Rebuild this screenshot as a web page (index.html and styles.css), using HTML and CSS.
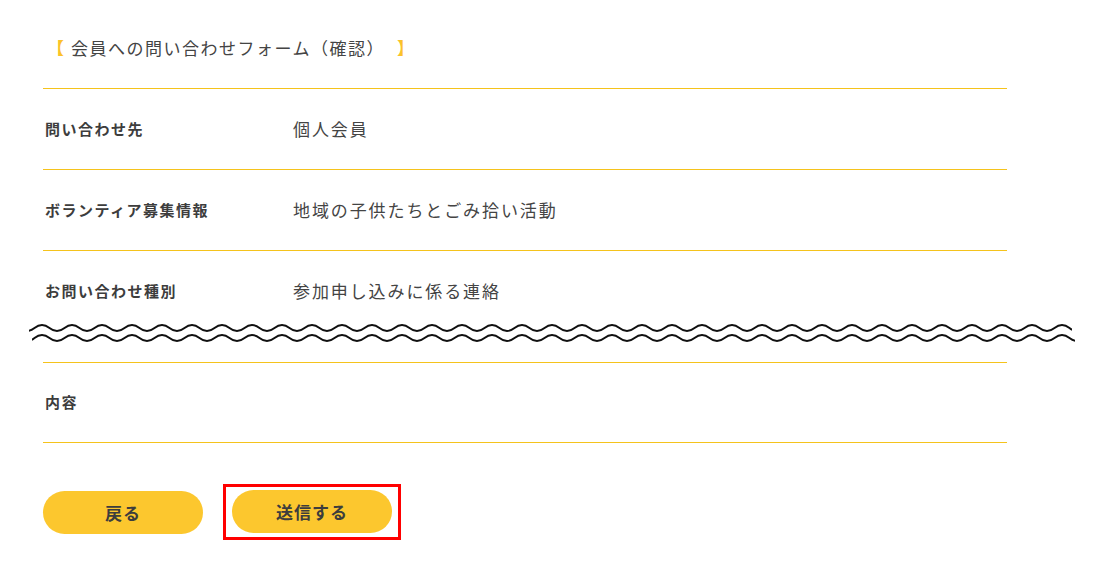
FILE: index.html
```html
<!DOCTYPE html>
<html lang="ja">
<head>
<meta charset="utf-8">
<title>会員への問い合わせフォーム（確認）</title>
<link rel="stylesheet" href="styles.css">
</head>
<body>
<main class="page">
  <h1 class="title"><span class="br br-open">【</span><span class="title-text">会員への問い合わせフォーム（確認）</span><span class="br br-close">】</span></h1>
  <dl class="rows">
    <div class="row">
      <dt class="label">問い合わせ先</dt>
      <dd class="value">個人会員</dd>
    </div>
    <div class="row">
      <dt class="label">ボランティア募集情報</dt>
      <dd class="value">地域の子供たちとごみ拾い活動</dd>
    </div>
    <div class="row row-cut">
      <dt class="label">お問い合わせ種別</dt>
      <dd class="value">参加申し込みに係る連絡</dd>
    </div>
    <div class="cut" aria-hidden="true">
      <svg class="wave" width="1048" height="24" viewBox="0 0 1048 24">
        <defs>
          <clipPath id="c1"><rect x="1" y="0" width="1043" height="12"/></clipPath>
          <clipPath id="c2"><rect x="4" y="12" width="1043" height="12"/></clipPath>
        </defs>
        <path clip-path="url(#c1)" fill="none" stroke="#111" stroke-width="2" d="M-8.5,7 q7.5,6 15,0 t15,0 t15,0 t15,0 t15,0 t15,0 t15,0 t15,0 t15,0 t15,0 t15,0 t15,0 t15,0 t15,0 t15,0 t15,0 t15,0 t15,0 t15,0 t15,0 t15,0 t15,0 t15,0 t15,0 t15,0 t15,0 t15,0 t15,0 t15,0 t15,0 t15,0 t15,0 t15,0 t15,0 t15,0 t15,0 t15,0 t15,0 t15,0 t15,0 t15,0 t15,0 t15,0 t15,0 t15,0 t15,0 t15,0 t15,0 t15,0 t15,0 t15,0 t15,0 t15,0 t15,0 t15,0 t15,0 t15,0 t15,0 t15,0 t15,0 t15,0 t15,0 t15,0 t15,0 t15,0 t15,0 t15,0 t15,0 t15,0 t15,0 t15,0"/>
        <path clip-path="url(#c2)" fill="none" stroke="#111" stroke-width="2" d="M-8.5,17 q7.5,6 15,0 t15,0 t15,0 t15,0 t15,0 t15,0 t15,0 t15,0 t15,0 t15,0 t15,0 t15,0 t15,0 t15,0 t15,0 t15,0 t15,0 t15,0 t15,0 t15,0 t15,0 t15,0 t15,0 t15,0 t15,0 t15,0 t15,0 t15,0 t15,0 t15,0 t15,0 t15,0 t15,0 t15,0 t15,0 t15,0 t15,0 t15,0 t15,0 t15,0 t15,0 t15,0 t15,0 t15,0 t15,0 t15,0 t15,0 t15,0 t15,0 t15,0 t15,0 t15,0 t15,0 t15,0 t15,0 t15,0 t15,0 t15,0 t15,0 t15,0 t15,0 t15,0 t15,0 t15,0 t15,0 t15,0 t15,0 t15,0 t15,0 t15,0 t15,0"/>
      </svg>
    </div>
    <div class="row row-last">
      <dt class="label">内容</dt>
      <dd class="value"></dd>
    </div>
  </dl>
  <div class="actions">
    <button class="btn" type="button">戻る</button>
    <div class="highlight">
      <button class="btn" type="submit">送信する</button>
    </div>
  </div>
</main>
</body>
</html>
```
FILE: styles.css
```css
* { box-sizing: border-box; }
html, body { margin: 0; padding: 0; background: #fff; }
body {
  font-family: "Noto Sans CJK JP", "Noto Sans", sans-serif;
  color: #3d3d3d;
}
.page {
  width: 964px;
  margin-left: 43px;
}
.title {
  margin: 0;
  height: 89px;
  padding-top: 36px;
  display: flex;
  align-items: flex-start;
  font-size: 17px;
  font-weight: 400;
  line-height: 24px;
  color: #444;
  letter-spacing: 1.5px;
  border-bottom: 1px solid #f5c31c;
}
.br {
  color: #fbc22a;
  font-weight: 700;
  letter-spacing: 0;
}
.br-open { margin-left: 4px; }
.title-text { margin-left: 7px; }
.br-close { margin-left: 12px; }
.rows { margin: 0; }
.row {
  display: flex;
  align-items: center;
  height: 81px;
  padding-bottom: 2px;
  border-bottom: 1px solid #f5c31c;
}
.row-cut {
  height: 80px;
  border-bottom: 0;
}
.row-last { border-top: 1px solid #f5c31c; }
.label {
  width: 250px;
  padding-left: 2px;
  font-size: 15px;
  font-weight: 700;
  letter-spacing: 1.5px;
  color: #3d3d3d;
}
.value {
  margin: 0;
  font-size: 17px;
  letter-spacing: 1.9px;
  color: #444;
}
.cut {
  height: 41px;
  margin-top: -10px;
  margin-left: -15px;
}
.wave { display: block; }
.actions {
  display: flex;
  align-items: center;
  gap: 20px;
  margin-top: 41px;
}
.btn {
  width: 160px;
  height: 43px;
  border: 0;
  border-radius: 22px;
  background: #fcc72e;
  font-family: "Noto Sans CJK JP", "Noto Sans", sans-serif;
  font-size: 17px;
  font-weight: 700;
  letter-spacing: 1px;
  color: #3d3d3d;
  padding: 0;
}
.highlight {
  border: 3px solid #ff0000;
  padding: 3px 6px 4px;
  display: flex;
}
```
